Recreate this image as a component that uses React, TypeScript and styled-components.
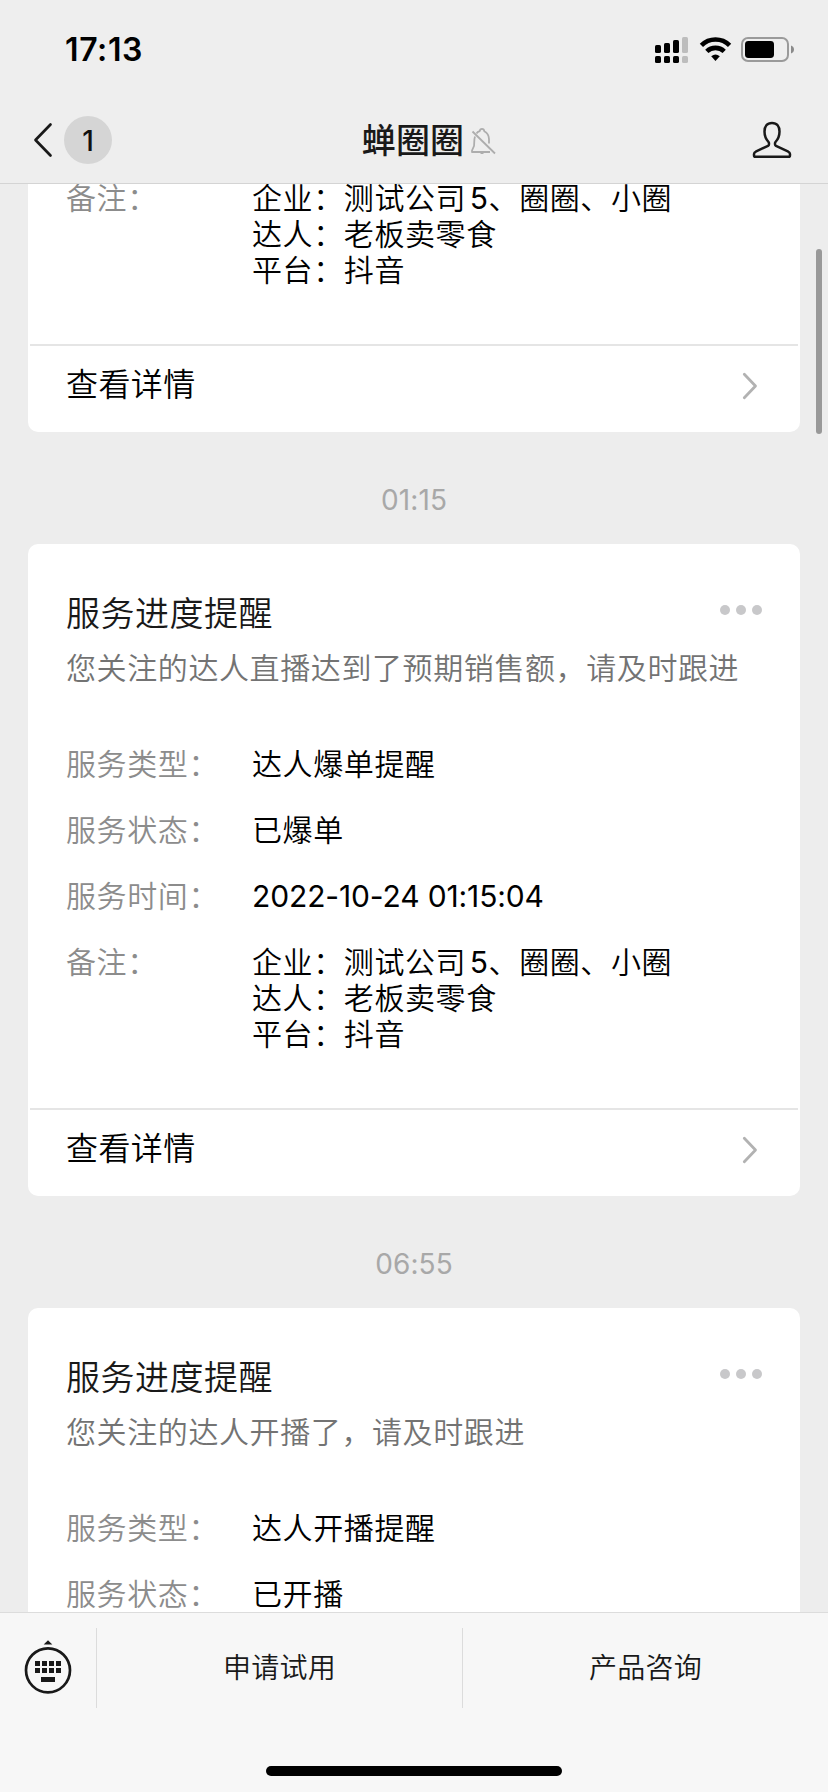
import React from 'react';
import styled, { createGlobalStyle } from 'styled-components';

const GlobalStyle = createGlobalStyle`
  * { box-sizing: border-box; }
  body {
    margin: 0;
    background: #ededed;
    font-family: Inter, 'Noto Sans CJK SC', sans-serif;
  }
`;

const Screen = styled.div`
  width: 828px;
  height: 1792px;
  display: flex;
  flex-direction: column;
  overflow: hidden;
  background: #ededed;
`;

const Header = styled.header`
  flex: none;
  height: 184px;
  background: #eeeeee;
  border-bottom: 1px solid #d4d4d4;
`;

const StatusBar = styled.div`
  height: 96px;
  padding: 4px 34px 0 65px;
  display: flex;
  align-items: center;
  justify-content: space-between;
`;

const Clock = styled.div`
  font-size: 32px;
  font-weight: 600;
  line-height: 40px;
  letter-spacing: 0.6px;
  color: #000;
`;

const StatusIcons = styled.svg`
  display: block;
`;

const NavBar = styled.nav`
  height: 88px;
  padding: 0 36px 0 33px;
  display: grid;
  grid-template-columns: 200px 1fr 200px;
  align-items: center;
`;

const BackGroup = styled.div`
  display: flex;
  align-items: center;
  gap: 11px;
`;

const CountBadge = styled.span`
  width: 48px;
  height: 48px;
  border-radius: 50%;
  background: #d5d5d5;
  color: #111;
  font-size: 28px;
  font-weight: 500;
  line-height: 50px;
  text-align: center;
`;

const NavTitle = styled.h1`
  margin: 0;
  padding: 2px 0 0 33px;
  display: flex;
  align-items: center;
  justify-content: center;
  gap: 6px;
  font-size: 34px;
  font-weight: 500;
  line-height: 48px;
  letter-spacing: 0.2px;
  color: #191919;
`;

const NavAction = styled.div`
  display: flex;
  justify-content: flex-end;
`;

const Feed = styled.main`
  position: relative;
  flex: 1;
  min-height: 0;
  overflow: hidden;
  padding: 0 28px;
`;

const ScrollThumb = styled.div`
  position: absolute;
  top: 65px;
  right: 6px;
  width: 6px;
  height: 185px;
  border-radius: 3px;
  background: #999;
`;

const Card = styled.article<{ $continued?: boolean }>`
  background: #fff;
  border-radius: ${(p) => (p.$continued ? '0 0 10px 10px' : '10px')};
  margin-top: ${(p) => (p.$continued ? '-4px' : '0')};
`;

const CardHead = styled.div`
  padding: 46px 38px 0;
  display: flex;
  justify-content: space-between;
`;

const CardTitle = styled.h2`
  margin: 0;
  font-size: 34px;
  font-weight: 350;
  line-height: 48px;
  letter-spacing: 0.5px;
  color: #191919;
`;

const MoreDots = styled.div`
  display: flex;
  gap: 6px;
  padding-top: 15px;
`;

const Dot = styled.i`
  width: 10px;
  height: 10px;
  border-radius: 50%;
  background: #c8c8ca;
`;

const Summary = styled.p`
  margin: 8px 0 0;
  padding: 0 38px;
  font-size: 30px;
  font-weight: 350;
  line-height: 44px;
  letter-spacing: 0.6px;
  white-space: nowrap;
  color: #737373;
`;

const Fields = styled.dl<{ $afterSummary?: boolean }>`
  margin: 0;
  padding: ${(p) => (p.$afterSummary ? '56px' : '0')} 38px 56px;
  display: flex;
  flex-direction: column;
  gap: 30px;
`;

const Field = styled.div`
  display: grid;
  grid-template-columns: 186px 1fr;
  font-size: 30px;
  line-height: 36px;
  letter-spacing: 0.6px;
  white-space: nowrap;
`;

const FieldName = styled.dt`
  font-weight: 350;
  color: #8c8c8c;
`;

const FieldValue = styled.dd<{ $numeric?: boolean }>`
  margin: 0;
  color: #000;
  font-weight: ${(p) => (p.$numeric ? 400 : 350)};
  letter-spacing: ${(p) => (p.$numeric ? '-0.13px' : 'inherit')};
`;

const Digit = styled.span`
  margin-left: 3.5px;
  font-weight: 400;
`;

const CardFooter = styled.div`
  height: 88px;
  margin: 0 2px;
  padding: 0 40px 9px 36px;
  border-top: 2px solid #e5e5e5;
  display: flex;
  align-items: center;
  justify-content: space-between;
  font-size: 32px;
  font-weight: 350;
  line-height: 40px;
  letter-spacing: 0.4px;
  color: #000;
`;

const Timestamp = styled.time`
  display: block;
  height: 112px;
  padding-top: 50px;
  text-align: center;
  font-size: 28px;
  line-height: 36px;
  letter-spacing: 0.1px;
  color: #a8a8a8;
`;

const BottomBar = styled.footer`
  flex: none;
  height: 180px;
  background: #f7f7f7;
  border-top: 1px solid #dcdcdc;
`;

const MenuRow = styled.div`
  height: 112px;
  padding-top: 15px;
  display: grid;
  grid-template-columns: 96px 366px 366px;
`;

const KeyboardToggle = styled.div`
  height: 80px;
  padding-left: 24px;
  padding-top: 12px;
`;

const MenuItem = styled.div`
  height: 80px;
  border-left: 1px solid #dcdcdc;
  text-align: center;
  font-size: 28px;
  font-weight: 350;
  line-height: 81px;
  letter-spacing: 0.3px;
  color: #191919;
`;

const HomeIndicator = styled.div`
  width: 296px;
  height: 10px;
  margin: 41px auto 0;
  border-radius: 5px;
  background: #000;
`;

const SignalWifiBattery = () => (
  <StatusIcons width="140" height="28" viewBox="0 0 140 28">
    <g fill="#000">
      <rect x="1" y="9" width="6" height="8" rx="1.6" />
      <rect x="10" y="7" width="6" height="10" rx="1.6" />
      <rect x="19" y="4" width="6" height="13" rx="1.6" />
      <rect x="1" y="20" width="6" height="7" rx="1.6" />
      <rect x="10" y="20" width="6" height="7" rx="1.6" />
      <rect x="19" y="20" width="6" height="7" rx="1.6" />
    </g>
    <g fill="#bdbdbd">
      <rect x="28" y="1" width="6" height="16" rx="1.6" />
      <rect x="28" y="20" width="6" height="7" rx="1.6" />
    </g>
    <g fill="none" stroke="#000" strokeWidth="4.6">
      <path d="M47.400 9.300a20 20 0 0 1 28.200 0" />
      <path d="M52.800 15.400a12.500 12.500 0 0 1 17.400 0" />
    </g>
    <path d="M57.200 20.300a6.700 6.700 0 0 1 8.600 0L61.500 25z" fill="#000" />
    <rect x="88" y="2" width="46" height="23" rx="6" fill="none" stroke="#9a9a9a" strokeWidth="2" />
    <rect x="91" y="5" width="29" height="17" rx="3.4" fill="#000" />
    <path d="M137 9.500q3 1.200 3 4t-3 4z" fill="#8a8a8a" />
  </StatusIcons>
);

const BackChevron = () => (
  <svg width="20" height="36" viewBox="0 0 20 36" fill="none" stroke="#191919" strokeWidth="2.700" strokeLinecap="round" strokeLinejoin="round">
    <path d="M17.500 2.500L2.500 18l15 15.500" />
  </svg>
);

const MutedBell = () => (
  <svg width="26" height="28" viewBox="0 0 26 28" fill="none" stroke="#adadad" strokeWidth="1.800" strokeLinejoin="round">
    <path d="M5 9.500C4 12 4.400 16 4 19L2 23.500v1.500h18M6.500 6.400Q7.500 4.900 9.700 4.200 10 1.800 12 1.800t2.300 2.400Q18.800 6.500 19 12v4.500" />
    <path d="M10.500 26h3M2.500 4.500L25 26.500" />
  </svg>
);

const Person = () => (
  <svg width="40" height="38" viewBox="0 0 40 38" fill="none" stroke="#191919" strokeWidth="2.500" strokeLinejoin="round">
    <path d="M20 2c-5 0-7.500 3.600-7.500 8.500 0 4.200 1.500 7.800 4 10.500.8 1 .7 3.200-.5 3.900L4.200 30.300Q2 31.400 2 33v1.200q0 1.600 1.600 1.600h32.800q1.600 0 1.600-1.600V33q0-1.600-2.200-2.700L24 24.900c-1.200-.7-1.300-2.900-.5-3.900 2.500-2.700 4-6.300 4-10.500C27.500 5.600 25 2 20 2z" />
  </svg>
);

const LinkChevron = styled.svg`
  margin-top: 3px;
`;

const Chevron = () => (
  <LinkChevron width="16" height="28" viewBox="0 0 16 28" fill="none" stroke="#b2b2b2" strokeWidth="2.800" strokeLinecap="round" strokeLinejoin="round">
    <path d="M2.300 2.300L13.500 14 2.300 25.700" />
  </LinkChevron>
);

const KeyboardIcon = () => (
  <svg width="48" height="56" viewBox="0 0 48 56">
    <path d="M19.700 4.600L24 .3l4.300 4.300z" fill="#191919" />
    <circle cx="24" cy="30.300" r="22" fill="none" stroke="#191919" strokeWidth="2.700" />
    <g fill="#191919">
      {[11, 18, 25, 32].map((x) => (
        <React.Fragment key={x}>
          <rect x={x} y="21" width="5" height="5" />
          <rect x={x} y="28" width="5" height="5" />
        </React.Fragment>
      ))}
      <rect x="17" y="37" width="14" height="5" />
    </g>
  </svg>
);

type FieldData = { name: string; lines: React.ReactNode[]; numeric?: boolean };

const REMARK: React.ReactNode[] = [
  <>
    企业：测试公司<Digit>5</Digit>、圈圈、小圈
  </>,
  '达人：老板卖零食',
  '平台：抖音',
];

const FieldList = ({ items, afterSummary }: { items: FieldData[]; afterSummary?: boolean }) => (
  <Fields $afterSummary={afterSummary}>
    {items.map((item) => (
      <Field key={item.name}>
        <FieldName>{item.name}：</FieldName>
        <FieldValue $numeric={item.numeric}>
          {item.lines.map((line, index) => (
            <div key={index}>{line}</div>
          ))}
        </FieldValue>
      </Field>
    ))}
  </Fields>
);

const DetailLink = () => (
  <CardFooter>
    <span>查看详情</span>
    <Chevron />
  </CardFooter>
);

const CardIntro = ({ summary }: { summary: string }) => (
  <>
    <CardHead>
      <CardTitle>服务进度提醒</CardTitle>
      <MoreDots>
        <Dot />
        <Dot />
        <Dot />
      </MoreDots>
    </CardHead>
    <Summary>{summary}</Summary>
  </>
);

export default function App() {
  return (
    <>
      <GlobalStyle />
      <Screen>
        <Header>
          <StatusBar>
            <Clock>17:13</Clock>
            <SignalWifiBattery />
          </StatusBar>
          <NavBar>
            <BackGroup>
              <BackChevron />
              <CountBadge>1</CountBadge>
            </BackGroup>
            <NavTitle>
              蝉圈圈
              <MutedBell />
            </NavTitle>
            <NavAction>
              <Person />
            </NavAction>
          </NavBar>
        </Header>
        <Feed>
          <Card $continued>
            <FieldList items={[{ name: '备注', lines: REMARK }]} />
            <DetailLink />
          </Card>
          <Timestamp>01:15</Timestamp>
          <Card>
            <CardIntro summary="您关注的达人直播达到了预期销售额，请及时跟进" />
            <FieldList
              afterSummary
              items={[
                { name: '服务类型', lines: ['达人爆单提醒'] },
                { name: '服务状态', lines: ['已爆单'] },
                { name: '服务时间', lines: ['2022-10-24 01:15:04'], numeric: true },
                { name: '备注', lines: REMARK },
              ]}
            />
            <DetailLink />
          </Card>
          <Timestamp>06:55</Timestamp>
          <Card>
            <CardIntro summary="您关注的达人开播了，请及时跟进" />
            <FieldList
              afterSummary
              items={[
                { name: '服务类型', lines: ['达人开播提醒'] },
                { name: '服务状态', lines: ['已开播'] },
              ]}
            />
          </Card>
          <ScrollThumb />
        </Feed>
        <BottomBar>
          <MenuRow>
            <KeyboardToggle>
              <KeyboardIcon />
            </KeyboardToggle>
            <MenuItem>申请试用</MenuItem>
            <MenuItem>产品咨询</MenuItem>
          </MenuRow>
          <HomeIndicator />
        </BottomBar>
      </Screen>
    </>
  );
}
